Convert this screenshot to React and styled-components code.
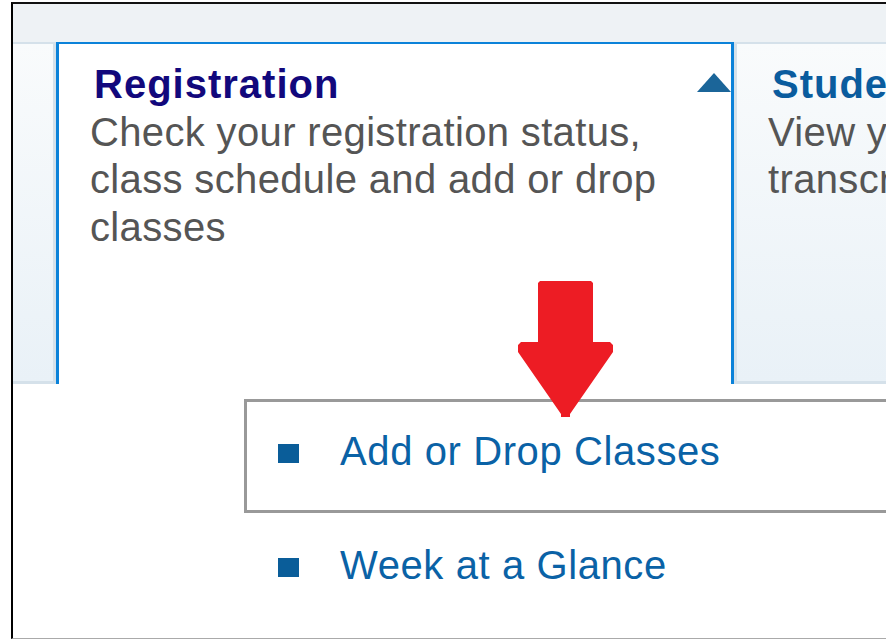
import React from 'react'
import styled, { createGlobalStyle } from 'styled-components'

const GlobalStyle = createGlobalStyle`
    html, body {
        margin: 0;
        padding: 0;
        overflow: hidden;
        background: #fff;
    }
    body {
        font-family: "Liberation Sans", Arial, sans-serif;
    }
`

const tabs = [
    { id: 'prev', title: '', text: '', edge: 'right' },
    {
        id: 'registration',
        title: 'Registration',
        text: 'Check your registration status, class schedule and add or drop classes',
        active: true,
    },
    {
        id: 'records',
        title: 'Student Records',
        text: 'View your grades and transcript',
        edge: 'left',
    },
]

const links = [
    { label: 'Add or Drop Classes', focused: true },
    { label: 'Week at a Glance' },
]

function App() {
    return (
        <>
            <GlobalStyle />
            <Frame>
                <TopBar />
                <TabRow>
                    {tabs.map((tab) => (
                        <Tab key={tab.id} $active={tab.active} $edge={tab.edge}>
                            {tab.title && (
                                <TitleRow>
                                    <Title $active={tab.active}>{tab.title}</Title>
                                    {tab.active && (
                                        <Toggle viewBox="0 0 34 19">
                                            <polygon points="17,0 34,19 0,19" fill="#1b6599" />
                                        </Toggle>
                                    )}
                                </TitleRow>
                            )}
                            {tab.text && <Description>{tab.text}</Description>}
                        </Tab>
                    ))}
                </TabRow>
                <MenuList>
                    {links.map((link) => (
                        <MenuItem key={link.label} $focused={link.focused}>
                            <Bullet />
                            <MenuLink href="#">{link.label}</MenuLink>
                        </MenuItem>
                    ))}
                </MenuList>
                {/* red callout pointing at the first link */}
                <Pointer viewBox="0 0 95 136">
                    <polygon
                        points="22,0 73,0 75,2 75,61 92,61 95,64 95,71 52,133 52,136 43,136 43,133 0,71 0,64 3,61 20,61 20,2"
                        fill="#ed1c24"
                    />
                </Pointer>
            </Frame>
        </>
    )
}

export default App

const Frame = styled.div`
    position: relative;
    box-sizing: border-box;
    width: 1200px;
    height: 637px;
    margin: 2px 0 0 11px;
    border-top: 2px solid #111;
    border-left: 2px solid #000;
    border-bottom: 1px solid #aaa;
    display: flex;
    flex-direction: column;
`

const TopBar = styled.div`
    height: 38px;
    background: #eef2f5;
`

const TabRow = styled.div`
    display: grid;
    grid-template-columns: 43px 678px 1fr;
    height: 342px;
`

const Tab = styled.div`
    box-sizing: border-box;
    padding: 17px 0 0 31px;
    overflow: hidden;
    background: ${(p) => (p.$active ? '#fff' : 'linear-gradient(#f9fbfc, #e9f1f7)')};
    border-top: 2px solid ${(p) => (p.$active ? '#0b82d9' : '#d5e1ea')};
    border-bottom: ${(p) => (p.$active ? 'none' : '3px solid #d5e1ea')};
    border-left: ${(p) =>
        p.$active ? '3px solid #0b82d9' : p.$edge === 'left' ? '3px solid #d5e1ea' : 'none'};
    border-right: ${(p) =>
        p.$active ? '3px solid #0b82d9' : p.$edge === 'right' ? '3px solid #d5e1ea' : 'none'};
`

const TitleRow = styled.div`
    display: flex;
    align-items: flex-start;
    justify-content: space-between;
`

const Title = styled.div`
    margin-left: 4px;
    font-size: 40px;
    line-height: 47.5px;
    font-weight: bold;
    letter-spacing: 1px;
    white-space: nowrap;
    color: ${(p) => (p.$active ? '#12087c' : '#0a5c9e')};
`

const Toggle = styled.svg`
    flex-shrink: 0;
    width: 34px;
    height: 19px;
    margin-top: 12px;
`

const Description = styled.div`
    margin-right: 45px;
    font-size: 40px;
    line-height: 47.5px;
    letter-spacing: 0.35px;
    color: #555;
`

const MenuList = styled.div`
    display: flex;
    flex-direction: column;
    margin: 15px 0 0 231px;
`

const MenuItem = styled.div`
    box-sizing: border-box;
    display: flex;
    align-items: flex-start;
    padding: 26px 0 34px 31px;
    border: 3px solid ${(p) => (p.$focused ? '#999' : 'transparent')};
`

const Bullet = styled.span`
    flex-shrink: 0;
    width: 21px;
    height: 19px;
    margin: 16px 41px 0 0;
    background: #0a5d99;
`

const MenuLink = styled.a`
    font-size: 40px;
    line-height: 47.5px;
    letter-spacing: 0.6px;
    color: #0a62a6;
    text-decoration: none;
`

const Pointer = styled.svg`
    position: absolute;
    left: 505px;
    top: 277px;
    width: 95px;
    height: 136px;
`
